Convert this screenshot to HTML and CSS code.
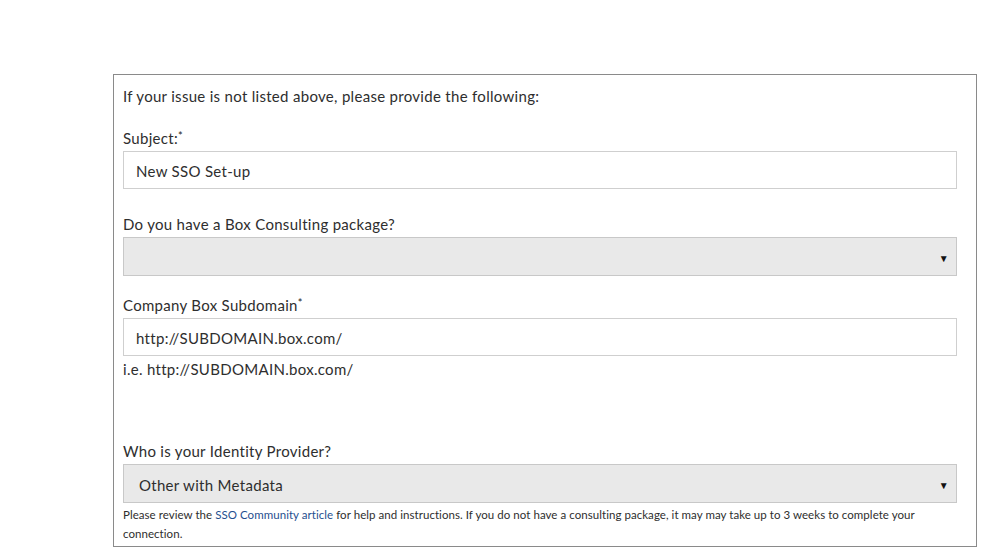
FILE: index.html
```html
<!DOCTYPE html>
<html>
<head>
<meta charset="utf-8">
<link rel="stylesheet" href="styles.css">
</head>
<body>
<div class="page">
  <div class="box">
    <p class="intro">If your issue is not listed above, please provide the following:</p>
    <div class="field">
      <label class="label">Subject:<sup>*</sup></label>
      <div class="input">New SSO Set-up</div>
    </div>
    <div class="field">
      <label class="label">Do you have a Box Consulting package?</label>
      <div class="select"><span class="val"></span><span class="arrow">&#9660;</span></div>
    </div>
    <div class="field">
      <label class="label">Company Box Subdomain<sup>*</sup></label>
      <div class="input">http://SUBDOMAIN.box.com/</div>
      <div class="hint">i.e. http://SUBDOMAIN.box.com/</div>
    </div>
    <div class="field idp">
      <label class="label">Who is your Identity Provider?</label>
      <div class="select"><span class="val">Other with Metadata</span><span class="arrow">&#9660;</span></div>
      <div class="help">Please review the <a href="#">SSO Community article</a> for help and instructions. If you do not have a consulting package, it may may take up to 3 weeks to complete your connection.</div>
    </div>
  </div>
</div>
</body>
</html>
```
FILE: styles.css
```css
* { box-sizing: border-box; }
html, body { margin: 0; padding: 0; background: #fff; }
body {
  font-family: Lato, "Open Sans", Arial, sans-serif;
  color: #2e2e2e;
  font-size: 15px;
  letter-spacing: 0.3px;
  line-height: 20px;
}
.page {
  padding: 74px 0 0 113px;
  width: 977px;
}
.box {
  width: 864px;
  border: 1px solid #8a8a8a;
  padding: 11px 19px 0 9px;
  height: 473px;
}
.intro { margin: 0; }
.field { display: flex; flex-direction: column; }
.field:nth-of-type(1) { margin-top: 22px; }
.field:nth-of-type(2) { margin-top: 25px; }
.field:nth-of-type(3) { margin-top: 19px; }
.field.idp { margin-top: 62px; }
.label { display: block; margin-bottom: 3px; }
.label sup { font-size: 11px; vertical-align: 4px; line-height: 0; color: #222; }
.input {
  height: 38px;
  border: 1px solid #cfcfcf;
  background: #fff;
  padding: 1px 12px 0;
  display: flex;
  align-items: center;
}
.select {
  height: 39px;
  border: 1px solid #c8c8c8;
  background: #e9e9e9;
  padding: 3px 7px 0 15px;
  display: flex;
  align-items: center;
  justify-content: space-between;
}
.arrow { font-size: 10px; color: #111; }
.hint { margin-top: 3px; }
.help {
  font-size: 11.5px;
  line-height: 19px;
  margin-top: 2px;
  letter-spacing: 0.05px;
  padding-right: 20px;
}
.help a { color: #1f4f8f; text-decoration: none; }
```
